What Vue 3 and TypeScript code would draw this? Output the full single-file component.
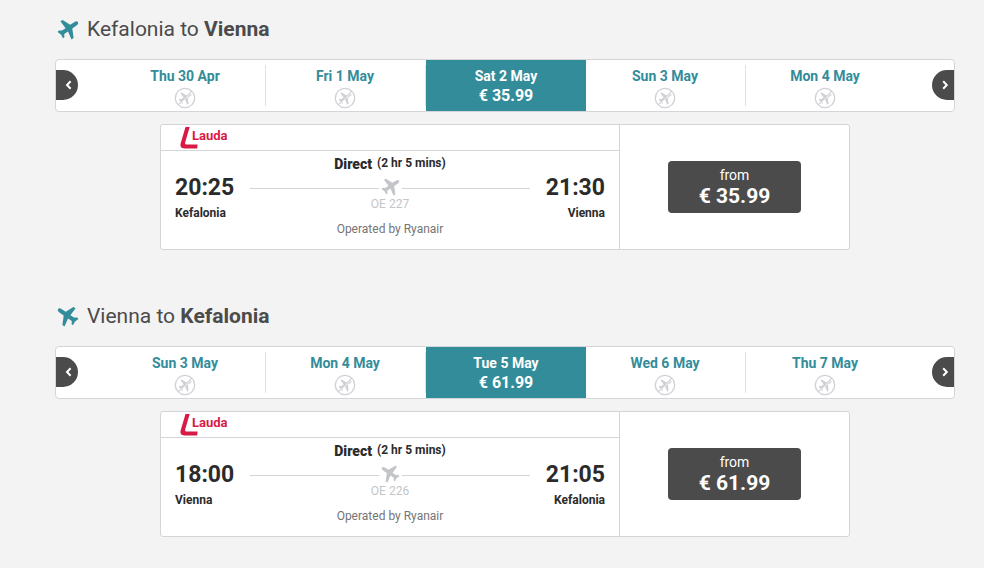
<script setup lang="ts">
interface DayOption {
  label: string
  price?: string
}

interface Leg {
  id: string
  from: string
  to: string
  inbound: boolean
  days: DayOption[]
  departs: string
  arrives: string
  duration: string
  flight: string
  price: string
}

const legs: Leg[] = [
  {
    id: 'outbound',
    from: 'Kefalonia',
    to: 'Vienna',
    inbound: false,
    days: [
      { label: 'Thu 30 Apr' },
      { label: 'Fri 1 May' },
      { label: 'Sat 2 May', price: '€ 35.99' },
      { label: 'Sun 3 May' },
      { label: 'Mon 4 May' },
    ],
    departs: '20:25',
    arrives: '21:30',
    duration: '(2 hr 5 mins)',
    flight: 'OE 227',
    price: '€ 35.99',
  },
  {
    id: 'inbound',
    from: 'Vienna',
    to: 'Kefalonia',
    inbound: true,
    days: [
      { label: 'Sun 3 May' },
      { label: 'Mon 4 May' },
      { label: 'Tue 5 May', price: '€ 61.99' },
      { label: 'Wed 6 May' },
      { label: 'Thu 7 May' },
    ],
    departs: '18:00',
    arrives: '21:05',
    duration: '(2 hr 5 mins)',
    flight: 'OE 226',
    price: '€ 61.99',
  },
]

const planePath =
  'M21 4.200c.6 1.200-.3 2.500-1.800 3.500L15.300 10.400 16.600 20l-2.100 1.600L11 13.400 7.200 16l.2 3.200L6 20.300l-1.800-3.500L.6 14l1.200-1.600 3.200.2 3.600-2.400L3.400 3.300 5.600 1.900l7.600 4.900 4-2.600c1.500-1 3.200-1.200 3.800 0z'
</script>

<template>
  <main class="page">
    <section v-for="leg in legs" :key="leg.id" class="leg">
      <h2 class="title">
        <svg class="title-plane" :class="{ flipped: leg.inbound }" viewBox="0 0 22 22" aria-hidden="true">
          <path :d="planePath" fill="currentColor" />
        </svg>
        <span>{{ leg.from }} to <strong>{{ leg.to }}</strong></span>
      </h2>

      <div class="strip">
        <button class="arrow arrow-prev" type="button" aria-label="Previous days">
          <svg viewBox="0 0 12 12" aria-hidden="true"><path d="M9.600 2.200 6 6l3.600 3.800" /></svg>
        </button>
        <div class="days">
          <button
            v-for="day in leg.days"
            :key="day.label"
            type="button"
            class="day"
            :class="{ selected: day.price }"
          >
            <span class="day-label">{{ day.label }}</span>
            <span v-if="day.price" class="day-price">{{ day.price }}</span>
            <svg v-else class="no-flight" viewBox="0 0 22 22" aria-hidden="true">
              <circle cx="11" cy="11" r="9.700" fill="none" stroke="currentColor" stroke-width="1.300" />
              <path :d="planePath" transform="translate(4.300 4.300) scale(.62)" fill="currentColor" />
              <path d="M4.800 18.400 18.400 4.800" stroke="#fff" stroke-width="1" />
              <path d="M4.200 17.800 17.800 4.200" stroke="currentColor" stroke-width="1.200" />
            </svg>
          </button>
        </div>
        <button class="arrow arrow-next" type="button" aria-label="Next days">
          <svg viewBox="0 0 12 12" aria-hidden="true"><path d="M6.200 2.200 9.800 6 6.200 9.800" /></svg>
        </button>
      </div>

      <article class="card">
        <div class="details">
          <header class="carrier">
            <svg class="carrier-mark" viewBox="0 0 18 22" aria-hidden="true">
              <path d="M5.500 0h4.200L5.200 15.200c-.4 1.500.2 2.400 1.800 2.400h10.600l-.4 4H5c-3.600 0-5.300-2-4.300-5.400z" fill="currentColor" />
            </svg>
            <span class="carrier-name">Lauda</span>
          </header>
          <div class="route">
            <div class="stop">
              <span class="time">{{ leg.departs }}</span>
              <span class="city">{{ leg.from }}</span>
            </div>
            <div class="middle">
              <div class="duration">
                <strong>Direct</strong>
                <span>{{ leg.duration }}</span>
              </div>
              <div class="path">
                <svg class="path-plane" :class="{ flipped: leg.inbound }" viewBox="0 0 22 22" aria-hidden="true">
                  <path :d="planePath" fill="currentColor" />
                </svg>
              </div>
              <span class="flight">{{ leg.flight }}</span>
              <span class="operator">Operated by Ryanair</span>
            </div>
            <div class="stop stop-end">
              <span class="time">{{ leg.arrives }}</span>
              <span class="city">{{ leg.to }}</span>
            </div>
          </div>
        </div>
        <div class="fare">
          <button class="fare-button" type="button">
            <span class="fare-from">from</span>
            <span class="fare-price">{{ leg.price }}</span>
          </button>
        </div>
      </article>
    </section>
  </main>
</template>

<style>
body {
  background: #f3f3f3;
}
</style>

<style scoped>
.page {
  box-sizing: border-box;
  padding: 14px 29px 31px 55px;
  font-family: Roboto, sans-serif;
  color: #2b2b2b;
  display: flex;
  flex-direction: column;
  gap: 51px;
}

button {
  font: inherit;
  border: 0;
  margin: 0;
  padding: 0;
  cursor: pointer;
}

.title {
  display: flex;
  align-items: center;
  gap: 8px;
  margin: 0 0 15px;
  padding-left: 2px;
  font-size: 21px;
  line-height: 30px;
  font-weight: 400;
  color: #4b4b4b;
}

.title strong {
  font-weight: 700;
}

.title-plane {
  width: 22px;
  height: 22px;
  color: #338c99;
}

.flipped {
  transform: scaleX(-1);
}

.strip {
  display: flex;
  justify-content: space-between;
  border: 1px solid #d3d5d8;
  border-radius: 4px;
  background: #fff;
}

.arrow {
  width: 22px;
  height: 30px;
  margin-top: 10px;
  background: #4b4b4b;
  display: flex;
  align-items: center;
  justify-content: center;
}

.arrow svg {
  width: 12px;
  height: 12px;
  fill: none;
  stroke: #fff;
  stroke-width: 2;
}

.arrow-prev {
  border-radius: 0 15px 15px 0;
}

.arrow-next {
  border-radius: 15px 0 0 15px;
}

.days {
  flex: 1;
  margin: 0 26px 0 28px;
  display: grid;
  grid-template-columns: repeat(5, 1fr);
}

.day {
  position: relative;
  height: 51px;
  background: transparent;
  color: #338c99;
  display: flex;
  flex-direction: column;
  align-items: center;
  padding: 7px 2px 0 0;
}

.day:not(:last-child)::after {
  content: '';
  position: absolute;
  right: 0;
  top: 5px;
  bottom: 5px;
  border-right: 1px solid #dfe1e3;
}

.day.selected {
  padding-right: 0;
  background: #338c99;
  color: #fff;
}

.day.selected::after {
  display: none;
}

.day-label {
  font-size: 14px;
  line-height: 18px;
  font-weight: 700;
}

.day-price {
  font-size: 16px;
  line-height: 22px;
  font-weight: 700;
}

.no-flight {
  width: 22px;
  height: 22px;
  margin-top: 2px;
  color: #cfd1d4;
}

.card {
  margin: 12px 105px 0;
  display: flex;
  border: 1px solid #d3d5d8;
  border-radius: 3px;
  background: #fff;
}

.details {
  flex: 2;
  border-right: 1px solid #d3d5d8;
}

.carrier {
  display: flex;
  height: 25px;
  padding-left: 19px;
  border-bottom: 1px solid #d3d5d8;
  color: #d91a46;
}

.carrier-mark {
  width: 18px;
  height: 22px;
  margin-top: 2px;
}

.carrier-name {
  margin-left: -6px;
  font-size: 13px;
  line-height: 22px;
  font-weight: 700;
}

.route {
  display: grid;
  grid-template-columns: 75px 1fr 75px;
  padding: 3px 14px 11px;
}

.stop {
  display: flex;
  flex-direction: column;
  padding-top: 19px;
}

.stop-end {
  align-items: flex-end;
}

.time {
  font-size: 23px;
  line-height: 30px;
  font-weight: 700;
}

.city {
  font-size: 12px;
  line-height: 20px;
  font-weight: 700;
}

.middle {
  display: flex;
  flex-direction: column;
  align-items: center;
}

.duration {
  display: flex;
  gap: 5px;
  font-size: 12px;
  line-height: 18px;
  font-weight: 700;
}

.duration strong {
  font-size: 14px;
  line-height: 20px;
}

.path {
  align-self: stretch;
  height: 28px;
  display: flex;
  align-items: center;
  gap: 2px;
  color: #c3c5c8;
}

.path::before,
.path::after {
  content: '';
  flex: 1;
  border-top: 1px solid #d3d5d8;
}

.path-plane {
  width: 19px;
  height: 19px;
  margin-bottom: 4px;
}

.flight {
  margin-top: -5px;
  font-size: 12px;
  line-height: 14px;
  color: #c3c5c8;
}

.operator {
  margin-top: 9px;
  font-size: 12px;
  line-height: 18px;
  color: #757575;
}

.fare {
  flex: 1;
  display: flex;
  align-items: center;
  justify-content: center;
}

.fare-button {
  display: flex;
  flex-direction: column;
  align-items: center;
  padding: 4px 31px 5px;
  border-radius: 4px;
  background: #4b4b4b;
  color: #fff;
}

.fare-from {
  font-size: 14px;
  line-height: 20px;
}

.fare-price {
  font-size: 21px;
  line-height: 23px;
  font-weight: 700;
}
</style>
